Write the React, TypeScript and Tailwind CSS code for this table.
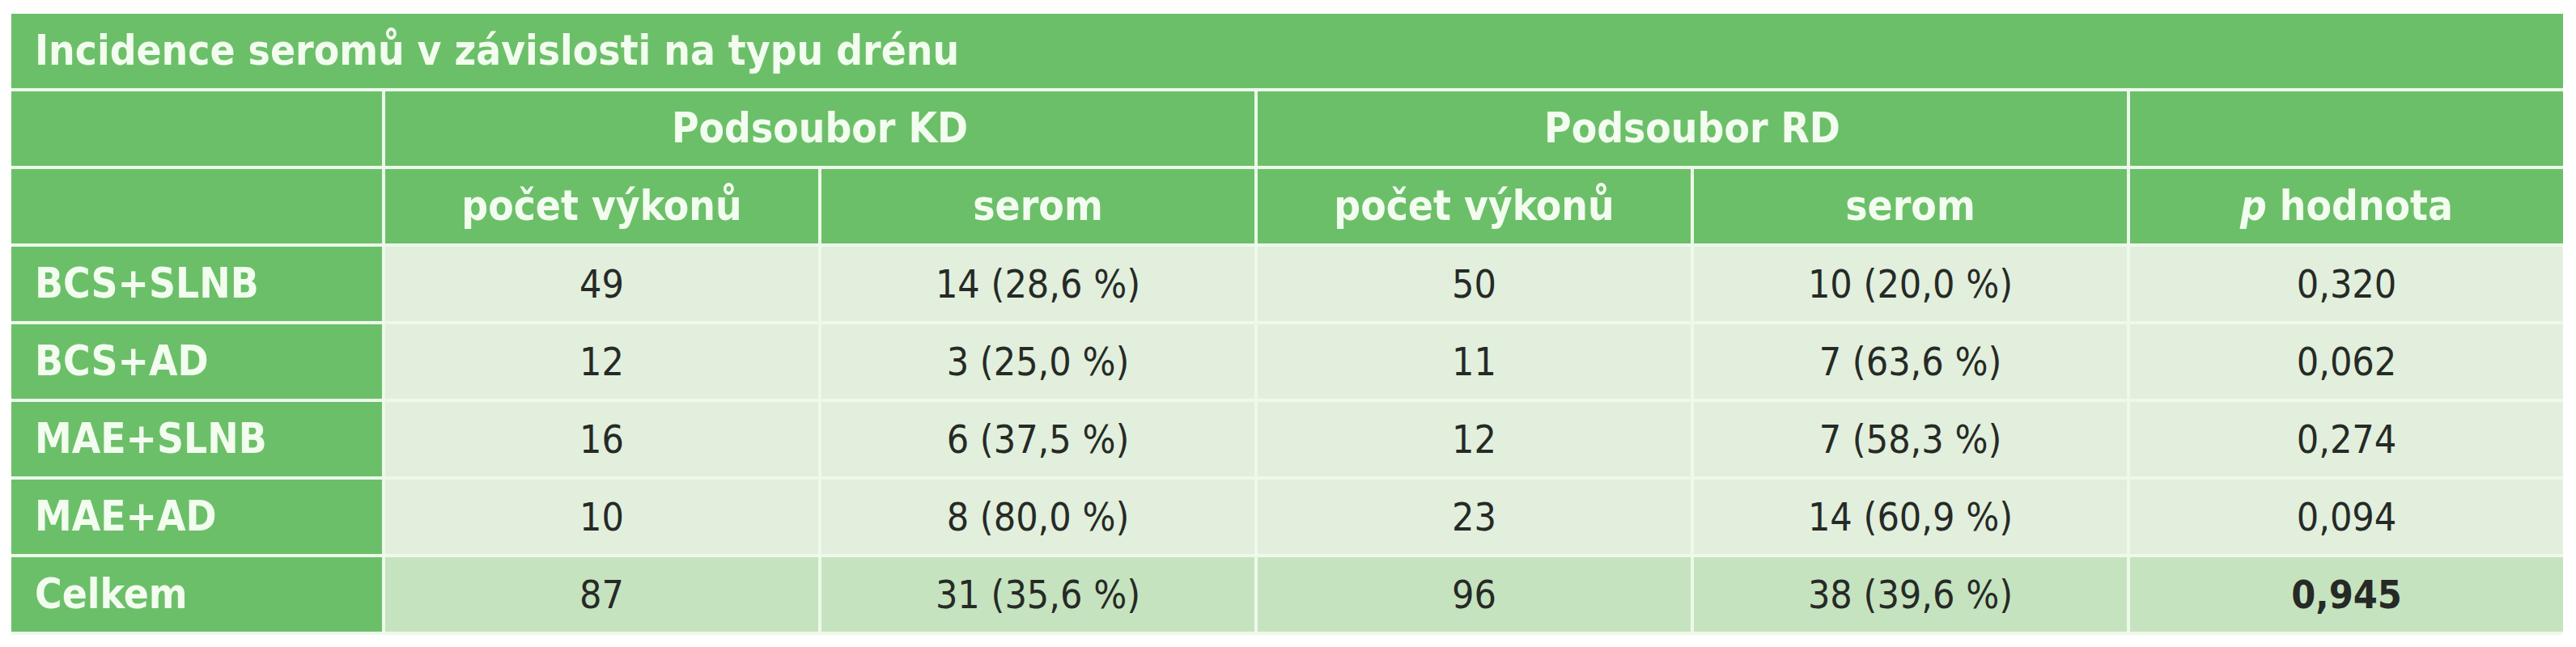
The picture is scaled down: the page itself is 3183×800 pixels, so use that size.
import React from "react";

type Row = {
  label: string;
  kdCount: string;
  kdSerom: string;
  rdCount: string;
  rdSerom: string;
  p: string;
  total?: boolean;
};

const rows: Row[] = [
  { label: "BCS+SLNB", kdCount: "49", kdSerom: "14 (28,6 %)", rdCount: "50", rdSerom: "10 (20,0 %)", p: "0,320" },
  { label: "BCS+AD", kdCount: "12", kdSerom: "3 (25,0 %)", rdCount: "11", rdSerom: "7 (63,6 %)", p: "0,062" },
  { label: "MAE+SLNB", kdCount: "16", kdSerom: "6 (37,5 %)", rdCount: "12", rdSerom: "7 (58,3 %)", p: "0,274" },
  { label: "MAE+AD", kdCount: "10", kdSerom: "8 (80,0 %)", rdCount: "23", rdSerom: "14 (60,9 %)", p: "0,094" },
  { label: "Celkem", kdCount: "87", kdSerom: "31 (35,6 %)", rdCount: "96", rdSerom: "38 (39,6 %)", p: "0,945", total: true },
];

function HeadCell({ children, className = "" }: { children?: React.ReactNode; className?: string }) {
  return (
    <div className={`flex h-[92px] items-center justify-center bg-[#6cbf69] text-[51px] font-bold text-[#f2fdef] ${className}`}>
      {children}
    </div>
  );
}

function DataCell({ children, total, bold }: { children: React.ReactNode; total?: boolean; bold?: boolean }) {
  return (
    <div
      className={`flex h-[92px] items-center justify-center text-[48px] text-[#262a26] ${
        total ? "bg-[#c6e3bf]" : "bg-[#e2efdc]"
      } ${bold ? "font-bold" : ""}`}
    >
      {children}
    </div>
  );
}

export default function App() {
  return (
    <div className="min-h-[800px] bg-white pl-[14px] pt-[17px] font-['DejaVu_Sans_Condensed','DejaVu_Sans',sans-serif]">
      <div className="grid w-fit grid-cols-[458px_repeat(5,535px)] gap-[4px] bg-[#edf9ea] pb-[4px]">
        {/* title */}
        <HeadCell className="col-span-6 justify-start pl-[29px]">Incidence seromů v závislosti na typu drénu</HeadCell>

        {/* group header */}
        <HeadCell />
        <HeadCell className="col-span-2">Podsoubor KD</HeadCell>
        <HeadCell className="col-span-2">Podsoubor RD</HeadCell>
        <HeadCell />

        {/* column header */}
        <HeadCell />
        <HeadCell>počet výkonů</HeadCell>
        <HeadCell>serom</HeadCell>
        <HeadCell>počet výkonů</HeadCell>
        <HeadCell>serom</HeadCell>
        <HeadCell>
          <span className="italic">p</span>&nbsp;hodnota
        </HeadCell>

        {rows.map((r) => (
          <React.Fragment key={r.label}>
            <HeadCell className="justify-start pl-[29px]">{r.label}</HeadCell>
            <DataCell total={r.total}>{r.kdCount}</DataCell>
            <DataCell total={r.total}>{r.kdSerom}</DataCell>
            <DataCell total={r.total}>{r.rdCount}</DataCell>
            <DataCell total={r.total}>{r.rdSerom}</DataCell>
            <DataCell total={r.total} bold={r.total}>
              {r.p}
            </DataCell>
          </React.Fragment>
        ))}
      </div>
    </div>
  );
}
